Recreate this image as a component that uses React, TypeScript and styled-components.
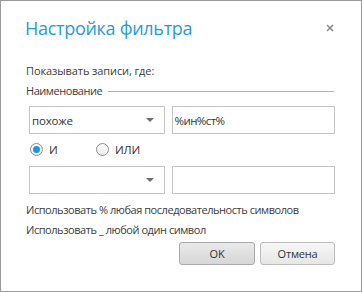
import React, { useState } from 'react';
import styled, { createGlobalStyle } from 'styled-components';

const GlobalStyle = createGlobalStyle`
  html, body {
    margin: 0;
    padding: 0;
    background: #ffffff;
  }
  * {
    box-sizing: border-box;
  }
`;

const Dialog = styled.div`
  width: 362px;
  height: 292px;
  border: 1px solid #9a9a9a;
  background: #ffffff;
  display: flex;
  flex-direction: column;
  font-family: 'Open Sans', 'Noto Sans', sans-serif;
  font-size: 11px;
  letter-spacing: -0.45px;
  color: #3c3c3c;
`;

const Header = styled.div`
  display: flex;
  align-items: center;
  justify-content: space-between;
  padding: 15px 24px 0 24px;
  height: 39px;
`;

const Title = styled.h1`
  margin: 0;
  font-size: 18px;
  letter-spacing: -0.3px;
  line-height: 24px;
  font-weight: 400;
  color: #1e9be3;
`;

const CloseButton = styled.button`
  width: 14px;
  height: 14px;
  padding: 0;
  border: none;
  background: transparent;
  display: flex;
  align-items: center;
  justify-content: center;
  cursor: pointer;
`;

const Body = styled.div`
  display: flex;
  flex-direction: column;
  padding: 21px 26px 0 25px;
`;

const Caption = styled.div`
  height: 20px;
  line-height: 20px;
  white-space: nowrap;
  letter-spacing: -0.1px;
`;

const Section = styled.div`
  display: flex;
  align-items: center;
  gap: 6px;
  height: 20px;
  line-height: 20px;
  &::after {
    content: '';
    flex: 1;
    height: 1px;
    background: #b4b4b4;
    margin-right: 1px;
  }
`;

const FieldRow = styled.div<{ $top: number }>`
  display: flex;
  gap: 7px;
  margin: ${p => p.$top}px 0 0 3px;
`;

const Combo = styled.div`
  width: 136px;
  height: 28px;
  border: 1px solid #c6c6c6;
  display: flex;
  align-items: center;
  justify-content: space-between;
  padding: 0 10px 0 2px;
  font-size: 11.5px;
  letter-spacing: -0.2px;
  color: #333;
`;

const Arrow = styled.span`
  width: 0;
  height: 0;
  border-left: 4px solid transparent;
  border-right: 4px solid transparent;
  border-top: 4px solid #6e6e6e;
`;

const TextField = styled.div`
  width: 164px;
  height: 28px;
  border: 1px solid #c6c6c6;
  display: flex;
  align-items: center;
  padding: 0 2px;
  font-size: 11.5px;
  letter-spacing: -0.6px;
  color: #333;
`;

const RadioRow = styled.div`
  display: flex;
  align-items: center;
  height: 22px;
  margin: 4px 0 6px 4px;
`;

const RadioLabel = styled.label<{ $width: number }>`
  display: flex;
  align-items: center;
  gap: 6px;
  width: ${p => p.$width}px;
  cursor: pointer;
  font-size: 11.5px;
  letter-spacing: -0.2px;
  color: #333;
`;

const RadioCircle = styled.span<{ $checked: boolean }>`
  width: 13px;
  height: 13px;
  border-radius: 50%;
  border: 1px solid #8c8c8c;
  background: linear-gradient(#ffffff, #ececec);
  display: flex;
  align-items: center;
  justify-content: center;
  &::after {
    content: '';
    width: 7px;
    height: 7px;
    border-radius: 50%;
    background: ${p => (p.$checked ? '#1a96e8' : 'transparent')};
  }
`;

const Hint = styled.div<{ $top?: number }>`
  height: 20px;
  line-height: 20px;
  white-space: nowrap;
  margin-top: ${p => p.$top ?? 0}px;
`;

const Footer = styled.div`
  display: flex;
  justify-content: flex-end;
  gap: 5px;
  margin-top: 2px;
`;

const Button = styled.button<{ $primary?: boolean }>`
  height: 23px;
  width: ${p => (p.$primary ? 76 : 75)}px;
  border: 1px solid ${p => (p.$primary ? '#a9a9a9' : '#bcbcbc')};
  border-radius: 3px;
  background: ${p =>
    p.$primary
      ? 'linear-gradient(#e9e9e9, #d7d7d7)'
      : 'linear-gradient(#f7f7f7, #e6e6e6)'};
  font-family: 'Open Sans', 'Noto Sans', sans-serif;
  font-size: 11px;
  letter-spacing: -0.2px;
  color: #333;
  padding: 0;
  cursor: pointer;
`;

const App: React.FC = () => {
  const [mode, setMode] = useState<'and' | 'or'>('and');

  return (
    <>
      <GlobalStyle />
      <Dialog>
        <Header>
          <Title>Настройка фильтра</Title>
          <CloseButton aria-label="Закрыть">
            <svg width="8" height="8" viewBox="0 0 8 8">
              <path d="M1 1 L7 7 M7 1 L1 7" stroke="#8a8a8a" strokeWidth="1.6" />
            </svg>
          </CloseButton>
        </Header>
        <Body>
          <Caption>Показывать записи, где:</Caption>
          <Section>Наименование</Section>
          <FieldRow $top={5}>
            <Combo>
              похоже
              <Arrow />
            </Combo>
            <TextField>%ин%ст%</TextField>
          </FieldRow>
          <RadioRow>
            <RadioLabel $width={66} onClick={() => setMode('and')}>
              <RadioCircle $checked={mode === 'and'} />И
            </RadioLabel>
            <RadioLabel $width={80} onClick={() => setMode('or')}>
              <RadioCircle $checked={mode === 'or'} />ИЛИ
            </RadioLabel>
          </RadioRow>
          <FieldRow $top={0}>
            <Combo>
              <span />
              <Arrow />
            </Combo>
            <TextField />
          </FieldRow>
          <Hint $top={6}>Использовать % любая последовательность символов</Hint>
          <Hint>Использовать _ любой один символ</Hint>
          <Footer>
            <Button $primary>OK</Button>
            <Button>Отмена</Button>
          </Footer>
        </Body>
      </Dialog>
    </>
  );
};

export default App;
